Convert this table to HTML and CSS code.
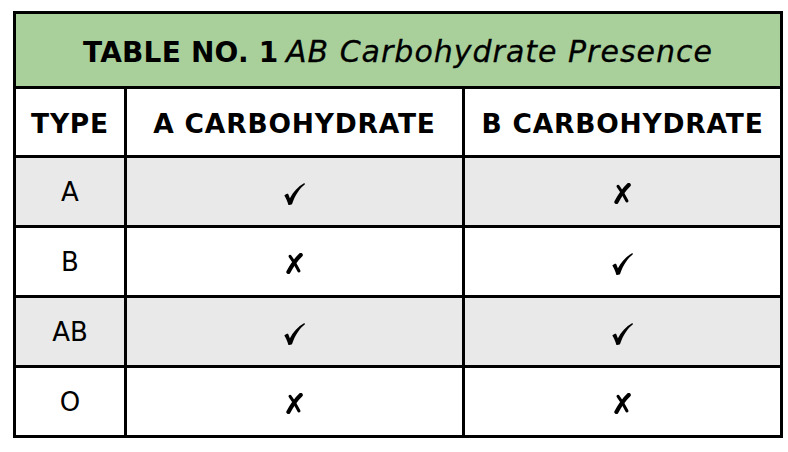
FILE: index.html
```html
<!DOCTYPE html>
<html>
<head>
<meta charset="utf-8">
<link rel="stylesheet" href="styles.css">
</head>
<body>
<svg class="defs" width="0" height="0" aria-hidden="true">
  <defs>
    <symbol id="chk" viewBox="0 0 20 21">
      <path d="M0.3 12 C1.5 10.8 2.9 10.2 4 10.4 C4.6 11.9 5.1 13.2 5.6 14.5 C8.6 8.8 13.2 3.4 19.4 0 L20 1.2 C14.8 5.2 10.6 11.6 7.6 20.2 C6.8 20.7 5.4 21 4.2 21 C3.2 17.6 1.8 14.5 0.3 12 Z" fill="#000"/>
    </symbol>
    <symbol id="crs" viewBox="0 0 16 20">
      <path d="M13.9 1.9 Q8 7.5 2.2 18" stroke="#000" stroke-width="4" stroke-linecap="round" fill="none"/>
      <path d="M3.8 3.2 Q8.2 9 12.2 17" stroke="#000" stroke-width="3" stroke-linecap="round" fill="none"/>
    </symbol>
  </defs>
</svg>
<div class="table">
  <div class="title"><span><b>TABLE NO. 1</b> <i>AB Carbohydrate Presence</i></span></div>
  <div class="cell head">TYPE</div>
  <div class="cell head">A CARBOHYDRATE</div>
  <div class="cell head">B CARBOHYDRATE</div>

  <div class="cell shade">A</div>
  <div class="cell shade"><svg class="chk"><use href="#chk"/></svg></div>
  <div class="cell shade"><svg class="crs"><use href="#crs"/></svg></div>

  <div class="cell">B</div>
  <div class="cell"><svg class="crs"><use href="#crs"/></svg></div>
  <div class="cell"><svg class="chk"><use href="#chk"/></svg></div>

  <div class="cell shade">AB</div>
  <div class="cell shade"><svg class="chk"><use href="#chk"/></svg></div>
  <div class="cell shade"><svg class="chk"><use href="#chk"/></svg></div>

  <div class="cell">O</div>
  <div class="cell"><svg class="crs"><use href="#crs"/></svg></div>
  <div class="cell"><svg class="crs"><use href="#crs"/></svg></div>
</div>
</body>
</html>
```
FILE: styles.css
```css
html, body {
  margin: 0;
  padding: 0;
  background: #ffffff;
}
body {
  padding: 11px 0 0 13px;
  font-family: "DejaVu Sans", sans-serif;
  color: #000;
}
.defs {
  position: absolute;
  width: 0;
  height: 0;
}
.table {
  display: grid;
  width: 764px;
  grid-template-columns: 108px 335px 315px;
  grid-template-rows: 72px 66px 67px 67px 67px 67px;
  gap: 3px;
  padding: 3px;
  background: #000;
}
.title {
  grid-column: 1 / 4;
  background: #a9d09b;
  display: flex;
  align-items: center;
  justify-content: center;
  padding-top: 3px;
  box-sizing: border-box;
}
.title span {
  white-space: nowrap;
  font-size: 24px;
}
.title b {
  font-weight: 700;
  font-size: 28px;
  letter-spacing: 0.2px;
}
.title i {
  font-weight: 400;
  font-style: italic;
  font-size: 30px;
  letter-spacing: 1px;
  -webkit-text-stroke: 0.3px #000;
}
.cell {
  background: #ffffff;
  display: flex;
  align-items: center;
  justify-content: center;
  font-size: 26px;
  font-weight: 400;
}
.cell.head {
  font-weight: 700;
  font-size: 26.5px;
  letter-spacing: 0.8px;
  padding-top: 2px;
  box-sizing: border-box;
}
.cell.shade {
  background: #e9e9e9;
}
.chk {
  width: 21px;
  height: 22px;
  margin-top: 4px;
}
.crs {
  width: 17px;
  height: 21px;
  margin-top: 4px;
}
```
